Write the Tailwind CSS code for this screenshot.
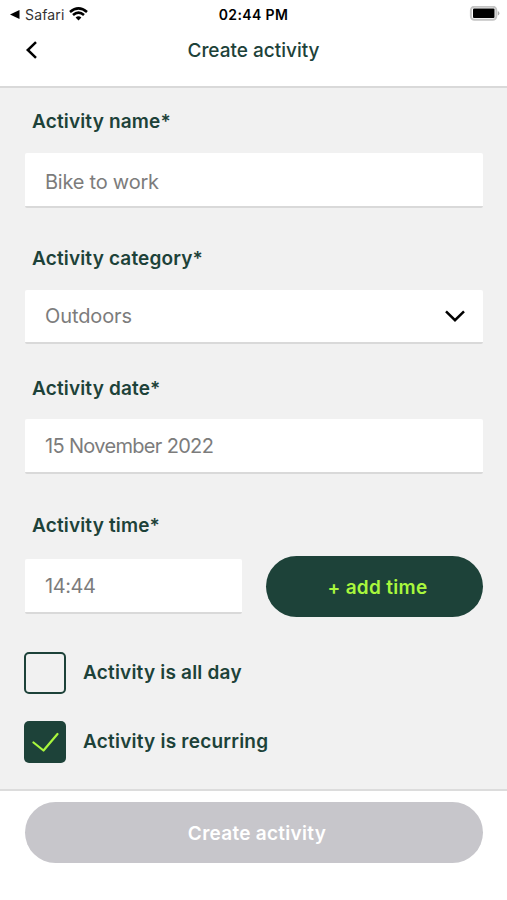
<!DOCTYPE html>
<html lang="en">
<head>
<meta charset="utf-8">
<title>Create activity</title>
<script src="https://cdn.jsdelivr.net/npm/@tailwindcss/browser@4"></script>
</head>
<body class="bg-white">
<div class="flex h-[900px] w-[507px] flex-col overflow-hidden bg-white font-['Inter',sans-serif] text-[#1d4239]">
  <header class="h-[88px] shrink-0 border-b-2 border-[#d9d9d9]">
    <div class="grid h-7 grid-cols-3 items-center text-black">
      <div class="flex items-center pl-2.5">
        <svg class="h-[9px] w-2.5" viewBox="0 0 10 9"><path d="M0 4.5 9.5 0v9z"/></svg>
        <span class="ml-[5px] text-[14px] tracking-[0.15px] text-[#333]">Safari</span>
        <svg class="ml-[5px] h-[14px] w-[19px]" viewBox="0 0 19 14" fill="none" stroke="#000" stroke-width="2.6"><path d="M1 4.900Q9.500-2.200 18 4.900"/><path d="M4 8Q9.500 3.300 15 8"/><path d="M6.600 10.400Q9.500 8.100 12.400 10.400L9.500 13.400Z" fill="#000" stroke="none"/></svg>
      </div>
      <div class="text-center text-[14px] font-semibold tracking-[0.4px]">02:44 PM</div>
      <svg class="mr-1.5 h-4 w-8 justify-self-end" viewBox="0 0 32 16"><rect x="1.900" y="0.700" width="25.400" height="13" rx="3.500" fill="#fff" stroke="#c4c4c4" stroke-width="2"/><rect x="4" y="2.600" width="21.500" height="9.400" rx="1"/><path d="M28.800 5.200q1.600 0 1.600 2.100t-1.600 2.100z" fill="#aaa"/></svg>
    </div>
    <div class="grid h-11 grid-cols-[60px_1fr_60px] items-center">
      <svg class="ml-[25px] h-[18px] w-3" viewBox="0 0 12 18" fill="none" stroke="#000" stroke-width="2.500"><path d="M11 1.200 2.800 9l8.200 7.800"/></svg>
      <h1 class="pt-0.5 text-center text-[19px] font-medium">Create activity</h1>
    </div>
  </header>
  <main class="h-[703px] shrink-0 border-b-2 border-[#dcdcdc] bg-[#f1f1f1] px-[25px] pt-5">
    <label class="block h-7 pl-[7px] text-[19px] leading-7 font-semibold tracking-[0.16px]">Activity name*</label>
    <div class="mt-[17px] flex h-[55px] w-[458px] items-center rounded-[2px] border-b-2 border-[#d9d9d9] bg-white pt-[5px] pl-5 text-[20px] tracking-[-0.23px] text-[#7c7c7c]"><span>Bike to work</span></div>
    <label class="mt-[37px] block h-7 pl-[7px] text-[19px] leading-7 font-semibold tracking-[0.16px]">Activity category*</label>
    <div class="mt-[17px] flex h-[54px] w-[458px] items-center justify-between rounded-[2px] border-b-2 border-[#d9d9d9] bg-white pr-[18px] pl-5 text-[20px] tracking-[-0.1px] text-[#7c7c7c]"><span>Outdoors</span>
      <svg class="h-3 w-5" viewBox="0 0 20 12" fill="none" stroke="#000" stroke-width="2.500"><path d="m1 1.300 9 8.900 9-8.900"/></svg></div>
    <label class="mt-[31px] block h-7 pl-[7px] text-[19px] leading-7 font-semibold tracking-[0.16px]">Activity date*</label>
    <div class="mt-4 flex h-[55px] w-[458px] items-center rounded-[2px] border-b-2 border-[#d9d9d9] bg-white pl-5 text-[20px] tracking-[-0.67px] text-[#7c7c7c]"><span>15 November 2022</span></div>
    <label class="mt-[38px] block h-7 pl-[7px] text-[19px] leading-7 font-semibold tracking-[0.16px]">Activity time*</label>
    <div class="mt-4 flex h-[61px] w-[458px] items-center justify-between">
      <div class="flex h-[55px] w-[217px] items-center rounded-[2px] border-b-2 border-[#d9d9d9] bg-white pl-5 text-[20px] tracking-[-0.45px] text-[#7c7c7c]"><span>14:44</span></div>
      <button class="h-[61px] w-[217px] rounded-full bg-[#1d4239] pt-[3px] pl-1.5 text-[19px] font-semibold tracking-[0.3px] text-[#a9f73d]">+ add time</button>
    </div>
    <div class="mt-[35px] -ml-px flex h-[42px] items-center gap-[17px]">
      <div class="size-[42px] rounded-[5px] border-2 border-[#1d4239]"></div>
      <span class="text-[19px] font-semibold tracking-[0.2px]">Activity is all day</span>
    </div>
    <div class="mt-[27px] -ml-px flex h-[42px] items-center gap-[17px]">
      <div class="flex size-[42px] items-center justify-center rounded-[5px] bg-[#1d4239]">
        <svg class="h-5 w-7" viewBox="0 0 28 20" fill="none" stroke="#a9f73d" stroke-width="2.200" stroke-linecap="round" stroke-linejoin="round"><path d="m2.500 10.500 10 8L26.500 2"/></svg>
      </div>
      <span class="text-[19px] font-semibold tracking-[0.22px]">Activity is recurring</span>
    </div>
  </main>
  <footer class="px-[25px] pt-[11px]">
    <button class="h-[61px] w-[458px] rounded-full bg-[#c7c6cb] pt-[3px] pl-1.5 text-[19px] font-semibold tracking-[0.28px] text-white">Create activity</button>
  </footer>
</div>
</body>
</html>
